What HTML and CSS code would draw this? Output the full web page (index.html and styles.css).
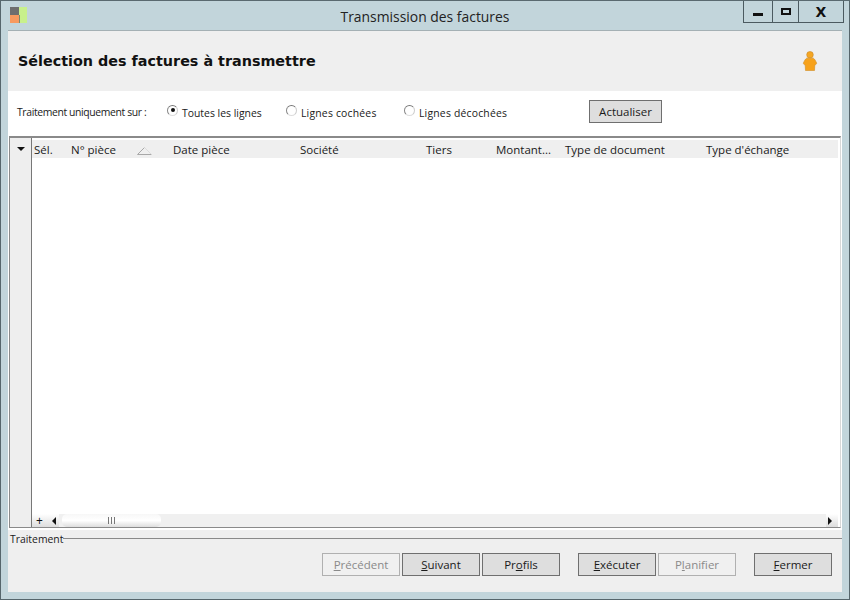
FILE: index.html
```html
<!DOCTYPE html>
<html lang="fr">
<head>
<meta charset="utf-8">
<title>Transmission des factures</title>
<link rel="stylesheet" href="styles.css">
</head>
<body>
<div class="window">
  <div class="titlebar">
    <svg class="app-icon" width="17" height="17" viewBox="0 0 17 17"><rect x="0" y="0" width="9" height="8" fill="#6e6e6e"/><rect x="0" y="8" width="9" height="8" fill="#f79a5f"/><rect x="9" y="0" width="8" height="16" fill="#c8f08c"/><rect x="9" y="8" width="1" height="8" fill="#7a8a70"/></svg>
    <div class="title">Transmission des factures</div>
    <div class="controls">
      <div class="ctrl ctrl-min"><span class="min-glyph"></span></div>
      <div class="ctrl ctrl-max"><span class="max-glyph"></span></div>
      <div class="ctrl ctrl-close">X</div>
    </div>
  </div>
  <div class="client">
    <header class="banner">
      <h1>Sélection des factures à transmettre</h1>
      <svg class="user" width="16" height="20" viewBox="0 0 16 20"><circle cx="8" cy="3.800" r="3.300" fill="#f5a623" stroke="#c98a2a" stroke-width=".6"/><path d="M4.600 7.200h6.800c1.200.8 2.200 2.600 3.200 4.800.2.800-.6 1.600-1.800 1.900l-.3 5.600H3.500l-.3-5.600C2 13.600 1.200 12.800 1.400 12c1-2.200 2-4 3.200-4.800z" fill="#f7a21b" stroke="#d08d25" stroke-width=".6"/></svg>
    </header>
    <div class="filters">
      <span class="filter-label">Traitement uniquement sur :</span>
      <label class="radio r1"><span class="dot on"></span><span class="radio-text">Toutes les lignes</span></label>
      <label class="radio r2"><span class="dot"></span><span class="radio-text wide">Lignes cochées</span></label>
      <label class="radio r3"><span class="dot"></span><span class="radio-text wide">Lignes décochées</span></label>
      <button class="btn refresh">Actualiser</button>
    </div>
    <section class="grid">
      <div class="rail">
        <span class="rail-arrow"></span>
      </div>
      <div class="grid-main">
        <div class="head">
          <span>Sél.</span>
          <span class="sorted">N° pièce<svg class="sort" width="15" height="8" viewBox="0 0 15 8"><path d="M7.500.5L.5 7.500h14" fill="none" stroke="#a8a8a8"/><path d="M7.500.5L14.500 7.500" fill="none" stroke="#dcdcdc"/></svg></span>
          <span>Date pièce</span>
          <span>Société</span>
          <span>Tiers</span>
          <span>Montant...</span>
          <span>Type de document</span>
          <span>Type d'échange</span>
        </div>
        <div class="rows"></div>
        <div class="hscroll">
          <span class="plus">+</span>
          <span class="arrow left"></span>
          <span class="track"><span class="thumb"><span class="grip"></span></span></span>
          <span class="arrow right"></span>
        </div>
      </div>
    </section>
    <footer class="footer">
      <div class="legend"><span>Traitement</span><i></i></div>
      <div class="actions">
        <button class="btn off"><u>P</u>récédent</button>
        <button class="btn"><u>S</u>uivant</button>
        <button class="btn">Pr<u>o</u>fils</button>
        <button class="btn gap-l"><u>E</u>xécuter</button>
        <button class="btn off">P<u>l</u>anifier</button>
        <button class="btn gap-l"><u>F</u>ermer</button>
      </div>
    </footer>
  </div>
</div>
</body>
</html>
```
FILE: styles.css
```css
* { box-sizing: border-box; }
html, body { margin: 0; padding: 0; }
body { width: 850px; height: 600px; overflow: hidden; font-family: "Open Sans", "Noto Sans", sans-serif; font-size: 11.5px; color: #1a1a1a; }
.window { width: 850px; height: 600px; background: #c2d5db; border: 1px solid #56666c; border-top-color: #5a6a70; padding: 0 7px 7px; display: flex; flex-direction: column; }
.titlebar { height: 29px; flex: none; display: flex; position: relative; align-items: center; }
.app-icon { position: absolute; left: 2px; top: 6px; }
.title { flex: 1; text-align: center; font-size: 13.9px; color: #222; padding-top: 2px; }
.controls { position: absolute; right: -2px; top: 0; display: flex; height: 22px; border: 1px solid #4b5a60; border-top: 0; }
.ctrl { display: flex; align-items: center; justify-content: center; border-left: 1px solid #4b5a60; }
.ctrl:first-child { border-left: 0; }
.ctrl-min { width: 28px; }
.ctrl-max { width: 26px; }
.ctrl-close { width: 45px; font-weight: 700; font-size: 14px; font-family: "DejaVu Sans", sans-serif; color: #111; }
.min-glyph { width: 10px; height: 3px; background: #111; margin-top: 5px; }
.max-glyph { width: 10px; height: 7px; border: 2px solid #111; }
.client { flex: 1; display: flex; flex-direction: column; background: #fff; border-top: 1px solid #a4b0b4; }
.banner { height: 60px; flex: none; background: #efefef; display: flex; align-items: center; justify-content: space-between; padding: 0 24px 0 10px; }
.banner h1 { margin: 0; font: 700 14.35px "DejaVu Sans", sans-serif; color: #111; }
.user { flex: none; }
.filters { height: 45px; flex: none; display: flex; align-items: center; padding: 0 0 4px 9px; font-size: 10.4px; }
.filter-label { width: 150px; margin-top: 1px; letter-spacing: -.37px; }
.radio { display: flex; align-items: center; gap: 5px; }
.radio-text { margin-top: 3px; }
.radio-text.wide { letter-spacing: .2px; }
.r1 { width: 119px; }
.r2 { width: 118px; }
.r3 { width: 185px; }
.dot { width: 11px; height: 11px; border-radius: 50%; border: 1px solid; border-color: #777 #ccc #ddd #888; background: #fff; margin-top: -3px; margin-right: -1px; position: relative; }
.dot.on::after { content: ""; position: absolute; left: 2.500px; top: 2.500px; width: 4px; height: 4px; border-radius: 50%; background: #111; }
.btn { font: 11.5px "Open Sans", "Noto Sans", sans-serif; color: #1a1a1a; background: #dedede; border: 1px solid #6f6f6f; width: 78px; height: 23px; padding: 0; text-align: center; }
.btn.off { background: #f0f0f0; border-color: #b0b0b0; color: #8a8a8a; }
.refresh { width: 73px; }
.grid { flex: 1; display: flex; min-height: 0; margin: 0 1px 0 1px; border-top: 2px solid #8a8a8a; border-left: 1px solid #8a8a8a; border-right: 1px solid #d8d8d8; border-bottom: 1px solid #8a8a8a; }
.rail { width: 22px; flex: none; background: #eee; border-right: 1px solid #777; display: flex; justify-content: center; padding-top: 9px; }
.rail-arrow { width: 0; height: 0; border: 4px solid transparent; border-top: 4px solid #111; border-bottom: 0; }
.grid-main { flex: 1; display: flex; flex-direction: column; min-width: 0; padding: 2px 2px 0 0; }
.head { height: 18px; flex: none; background: #efefef; display: grid; grid-template-columns: 37px 102px 127px 126px 70px 69px 141px 1fr; padding-left: 2px; align-items: center; line-height: 19px; }
.sorted { position: relative; }
.sort { position: absolute; left: 66px; top: 7px; }
.rows { flex: 1; background: #fff; }
.hscroll { height: 13px; flex: none; background: #f0f0f0; display: flex; align-items: stretch; }
.plus { width: 15px; text-align: center; font-size: 12px; line-height: 13px; color: #111; background: linear-gradient(#fff, #ddd); }
.arrow { width: 12px; background: linear-gradient(#fff, #ddd); display: flex; align-items: center; }
.arrow.left { justify-content: flex-end; padding-right: 3px; }
.arrow.right { justify-content: flex-start; padding-left: 2px; }
.arrow.left::before { content: ""; border: 4px solid transparent; border-right: 4px solid #111; border-left: 0; }
.arrow.right::before { content: ""; border: 4px solid transparent; border-left: 4px solid #111; border-right: 0; }
.track { flex: 1; padding-left: 3px; background: #f0f0f0; display: flex; }
.thumb { width: 99px; background: linear-gradient(#f7f7f7, #fff 50%, #ddd); border-radius: 5px; display: flex; align-items: center; justify-content: center; }
.grip { width: 7px; height: 7px; background: repeating-linear-gradient(90deg, #777 0 1px, transparent 1px 3px); }
.footer { height: 64px; flex: none; background: #efefef; display: flex; flex-direction: column; border-top: 2px solid #fff; }
.legend { display: flex; align-items: center; height: 16px; padding-left: 2px; margin-top: 1px; font-size: 10.4px; }
.legend i { flex: 1; height: 1px; background: #8a8a8a; margin-top: -1px; }
.actions { display: flex; justify-content: flex-end; padding: 6px 10px 0 0; gap: 2px; }
.gap-l { margin-left: 16px; }
```
